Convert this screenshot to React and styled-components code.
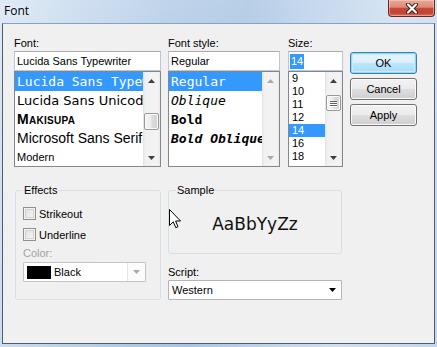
import React from 'react';
import styled, { createGlobalStyle, css } from 'styled-components';

const GlobalStyle = createGlobalStyle`
  html, body {
    margin: 0;
    padding: 0;
  }
  body {
    width: 437px;
    height: 347px;
    overflow: hidden;
    font-family: "Liberation Sans", Arial, sans-serif;
    font-size: 11px;
    color: #000;
  }
`;

const fontFaces = {
  mono: css`
    font-family: "DejaVu Sans Mono", monospace;
    font-size: 13px;
  `,
  unicode: css`
    font-family: "DejaVu Sans", sans-serif;
    font-size: 13px;
  `,
  block: css`
    font-family: "Liberation Sans", Arial, sans-serif;
    font-size: 14px;
    font-weight: 900;
    font-variant: small-caps;
    letter-spacing: 0.3px;
  `,
  sans: css`
    font-family: "Liberation Sans", Arial, sans-serif;
    font-size: 14px;
  `,
  modern: css`
    font-family: "Liberation Sans", Arial, sans-serif;
    font-size: 11px;
  `,
};

const fonts = [
  { name: 'Lucida Sans Typewriter', face: 'mono' },
  { name: 'Lucida Sans Unicode', face: 'unicode' },
  { name: 'Makisupa', face: 'block' },
  { name: 'Microsoft Sans Serif', face: 'sans' },
  { name: 'Modern', face: 'modern' },
];

const styles = [
  { name: 'Regular' },
  { name: 'Oblique', italic: true },
  { name: 'Bold', bold: true },
  { name: 'Bold Oblique', bold: true, italic: true },
];

const sizes = ['9', '10', '11', '12', '14', '16', '18'];

function App() {
  return (
    <>
      <GlobalStyle />
      <Window>
        <TitleBar>
          <Title>Font</Title>
          <CloseButton>
            <svg width="14" height="11" viewBox="0 0 14 11">
              <path d="M3 1.5 L11 9.5 M11 1.5 L3 9.5" stroke="#3d1b18" strokeWidth="4" strokeLinecap="round" />
              <path d="M3 1.5 L11 9.5 M11 1.5 L3 9.5" stroke="#ffffff" strokeWidth="2.2" strokeLinecap="round" />
            </svg>
          </CloseButton>
        </TitleBar>

        <Client>
          <TopRow>
            <Column $w={147} $gap={7}>
              <FieldLabel>Font:</FieldLabel>
              <TextBox>Lucida Sans Typewriter</TextBox>
              <ListBox>
                <Rows>
                  {fonts.map((f, i) => (
                    <FontRow key={f.name} $face={f.face} $selected={i === 0}>
                      {f.name}
                    </FontRow>
                  ))}
                </Rows>
                <ScrollBar offset={24} size={17} />
              </ListBox>
            </Column>

            <Column $w={112} $gap={8}>
              <FieldLabel>Font style:</FieldLabel>
              <TextBox>Regular</TextBox>
              <ListBox>
                <Rows>
                  {styles.map((s, i) => (
                    <StyleRow key={s.name} $bold={s.bold} $italic={s.italic} $selected={i === 0}>
                      {s.name}
                    </StyleRow>
                  ))}
                </Rows>
                <ScrollBar disabled />
              </ListBox>
            </Column>

            <Column $w={55} $gap={7}>
              <FieldLabel>Size:</FieldLabel>
              <TextBox>
                <Selection>14</Selection>
              </TextBox>
              <ListBox>
                <Rows>
                  {sizes.map((s) => (
                    <SizeRow key={s} $selected={s === '14'}>
                      {s}
                    </SizeRow>
                  ))}
                </Rows>
                <ScrollBar offset={6} size={16} grip />
              </ListBox>
            </Column>

            <Buttons>
              <Button $default>OK</Button>
              <Button>Cancel</Button>
              <Button>Apply</Button>
            </Buttons>
          </TopRow>

          <BottomRow>
            <Group $w={146} $h={116}>
              <Legend>Effects</Legend>
              <CheckRow>
                <CheckBox />
                Strikeout
              </CheckRow>
              <CheckRow>
                <CheckBox />
                Underline
              </CheckRow>
              <MutedLabel>Color:</MutedLabel>
              <Combo $w={123} $muted>
                <ComboField>
                  <Swatch />
                  Black
                </ComboField>
                <ComboArrow $muted>
                  <DownGlyph color="#a8a8a8" />
                </ComboArrow>
              </Combo>
            </Group>

            <SideColumn>
              <Group $w={174} $h={70}>
                <Legend>Sample</Legend>
                <SampleArea>AaBbYyZz</SampleArea>
              </Group>
              <ScriptLabel>Script:</ScriptLabel>
              <Combo $w={174}>
                <ComboField>Western</ComboField>
                <ComboArrow>
                  <DownGlyph color="#000" />
                </ComboArrow>
              </Combo>
            </SideColumn>
          </BottomRow>
        </Client>

        <Pointer width="13" height="21" viewBox="0 0 13 21">
          <path
            d="M0.5 0.5 L0.5 16.5 L4.3 12.8 L6.8 18.7 L9 17.7 L6.6 12 L11.5 12 Z"
            fill="#fff"
            stroke="#000"
            strokeWidth="1"
            strokeLinejoin="miter"
          />
        </Pointer>
      </Window>
    </>
  );
}

function UpGlyph({ color }) {
  return (
    <svg width="7" height="4" viewBox="0 0 7 4">
      <path d="M0 4 L3.5 0 L7 4 Z" fill={color} />
    </svg>
  );
}

function DownGlyph({ color }) {
  return (
    <svg width="7" height="4" viewBox="0 0 7 4">
      <path d="M0 0 L7 0 L3.5 4 Z" fill={color} />
    </svg>
  );
}

function ScrollBar({ offset = 0, size = 0, grip = false, disabled = false }) {
  const glyph = disabled ? '#a9a9a9' : '#3f3f3f';
  return (
    <Track>
      <ScrollArrow>
        <UpGlyph color={glyph} />
      </ScrollArrow>
      <Lane>
        {!disabled && (
          <Thumb $offset={offset} $size={size}>
            {grip && (
              <Grip>
                <span />
                <span />
                <span />
              </Grip>
            )}
          </Thumb>
        )}
      </Lane>
      <ScrollArrow>
        <DownGlyph color={glyph} />
      </ScrollArrow>
    </Track>
  );
}

export default App;

const Window = styled.div`
  position: relative;
  width: 437px;
  height: 347px;
  display: flex;
  flex-direction: column;
  box-sizing: border-box;
  background:
    linear-gradient(180deg, rgba(255, 255, 255, 0.18) 0%, rgba(255, 255, 255, 0) 40%),
    linear-gradient(100deg, #d8e6f4 0%, #c6d9ee 16%, #b2cbe6 34%, #a9c4e2 50%, #b9d0ea 62%, #cfdff1 80%, #c2d7ed 100%);
`;

const TitleBar = styled.div`
  height: 23px;
  display: flex;
  justify-content: space-between;
  align-items: flex-start;
  padding-left: 4px;
`;

const Title = styled.div`
  font-family: "Open Sans", "Liberation Sans", sans-serif;
  font-size: 12px;
  line-height: 16px;
  padding-top: 3px;
  color: #000;
  text-shadow: 0 0 6px rgba(255, 255, 255, 0.9);
`;

const CloseButton = styled.div`
  width: 47px;
  height: 17px;
  margin-right: 2px;
  box-sizing: border-box;
  border: 1px solid #6a2620;
  border-top: none;
  border-radius: 0 0 4px 4px;
  display: flex;
  align-items: center;
  justify-content: center;
  background: linear-gradient(180deg, #eaa999 0%, #dd8a77 45%, #c9483a 52%, #c2442f 80%, #d8705a 100%);
  box-shadow: inset 0 0 0 1px rgba(255, 220, 210, 0.45);
`;

const Client = styled.div`
  flex: 1;
  margin: 0 2px 3px 2px;
  border: 1px solid #4e5c6d;
  border-top-color: #8ba2bc;
  background: #f0f0f0;
  padding: 11px 0 0 11px;
  display: flex;
  flex-direction: column;
`;

const TopRow = styled.div`
  display: flex;
  align-items: flex-start;
`;

const Column = styled.div`
  width: ${(p) => p.$w}px;
  margin-right: ${(p) => p.$gap}px;
  display: flex;
  flex-direction: column;
`;

const FieldLabel = styled.div`
  height: 16px;
  line-height: 16px;
  white-space: nowrap;
`;

const TextBox = styled.div`
  height: 20px;
  box-sizing: border-box;
  border: 1px solid #b9c7d6;
  border-top-color: #abadb3;
  background: #fff;
  padding-left: 2px;
  line-height: 18px;
  white-space: nowrap;
  overflow: hidden;
`;

const Selection = styled.span`
  background: #3399ff;
  color: #fff;
  display: inline-block;
  line-height: 15px;
  padding: 0 1px;
  margin-left: -1px;
`;

const ListBox = styled.div`
  height: 96px;
  box-sizing: border-box;
  border: 1px solid #828790;
  background: #fff;
  display: flex;
`;

const Rows = styled.div`
  flex: 1;
  min-width: 0;
  overflow: hidden;
`;

const selectedRow = css`
  background: #3399ff;
  color: #fff;
`;

const FontRow = styled.div`
  height: 19px;
  line-height: 19px;
  padding-left: 2px;
  white-space: nowrap;
  overflow: hidden;
  ${(p) => fontFaces[p.$face]}
  ${(p) => p.$selected && selectedRow}
`;

const StyleRow = styled.div`
  height: 19px;
  line-height: 19px;
  padding-left: 2px;
  white-space: nowrap;
  overflow: hidden;
  font-family: "DejaVu Sans Mono", monospace;
  font-size: 13px;
  font-weight: ${(p) => (p.$bold ? 700 : 400)};
  font-style: ${(p) => (p.$italic ? 'italic' : 'normal')};
  ${(p) => p.$selected && selectedRow}
`;

const SizeRow = styled.div`
  height: 13px;
  line-height: 13px;
  padding-left: 3px;
  font-size: 11px;
  ${(p) => p.$selected && selectedRow}
`;

const Track = styled.div`
  width: 17px;
  display: flex;
  flex-direction: column;
  background: linear-gradient(90deg, #e3e3e3 0%, #f1f1f1 15%, #f4f4f4 85%, #e9e9e9 100%);
`;

const ScrollArrow = styled.div`
  height: 17px;
  display: flex;
  align-items: center;
  justify-content: center;
`;

const Lane = styled.div`
  flex: 1;
  display: flex;
  flex-direction: column;
  align-items: center;
`;

const Thumb = styled.div`
  margin-top: ${(p) => p.$offset}px;
  height: ${(p) => p.$size}px;
  width: 15px;
  box-sizing: border-box;
  border: 1px solid #9a9a9a;
  border-radius: 2px;
  background: linear-gradient(90deg, #f6f6f6 0%, #ececec 45%, #dcdcdc 55%, #d2d2d2 100%);
  box-shadow: inset 0 0 0 1px #fafafa;
  display: flex;
  align-items: center;
  justify-content: center;
`;

const Grip = styled.div`
  display: flex;
  flex-direction: column;
  gap: 1px;

  span {
    display: block;
    width: 7px;
    height: 1px;
    background: #5f5f5f;
    box-shadow: 0 1px 0 #fff;
  }
`;

const Buttons = styled.div`
  width: 67px;
  padding-top: 17px;
  display: flex;
  flex-direction: column;
  gap: 4px;
`;

const Button = styled.div`
  height: 22px;
  box-sizing: border-box;
  border: 1px solid #707070;
  border-radius: 3px;
  display: flex;
  align-items: center;
  justify-content: center;
  background: linear-gradient(180deg, #f2f2f2 0%, #ebebeb 48%, #dddddd 52%, #cfcfcf 100%);
  box-shadow: inset 0 0 0 1px #fbfbfb;

  ${(p) =>
    p.$default &&
    css`
      border-color: #3c7fb1;
      background: linear-gradient(180deg, #eaf6fd 0%, #d9f0fc 48%, #bee6fd 52%, #a7d9f5 100%);
      box-shadow: inset 0 0 0 1px #8fd7f7, inset 0 0 0 2px #c9ecfb;
    `}
`;

const BottomRow = styled.div`
  display: flex;
  align-items: flex-start;
  gap: 7px;
  margin-top: 17px;
  padding-left: 1px;
`;

const SideColumn = styled.div`
  display: flex;
  flex-direction: column;
`;

const Group = styled.fieldset`
  margin: 0;
  min-width: 0;
  width: ${(p) => p.$w}px;
  height: ${(p) => p.$h}px;
  box-sizing: border-box;
  padding: 7px 7px 0 7px;
  border: 1px solid #d5dfe5;
  border-radius: 3px;
  display: flex;
  flex-direction: column;
`;

const Legend = styled.legend`
  padding: 0 1px;
  line-height: 13px;
  font-size: 11px;
`;

const CheckRow = styled.div`
  height: 19px;
  display: flex;
  align-items: center;
  gap: 3px;
  margin-bottom: 2px;
`;

const CheckBox = styled.div`
  width: 13px;
  height: 13px;
  box-sizing: border-box;
  border: 1px solid #8e8f8f;
  background: linear-gradient(135deg, #dcdcdc 0%, #eeeeee 60%, #fbfbfb 100%);
  box-shadow: inset 0 0 0 1px #f4f4f4, inset 0 0 0 2px #d2d2d2;
`;

const MutedLabel = styled.div`
  height: 15px;
  line-height: 15px;
  color: #a3a3a3;
`;

const Combo = styled.div`
  width: ${(p) => p.$w}px;
  height: 20px;
  flex-shrink: 0;
  box-sizing: border-box;
  margin-top: ${(p) => (p.$muted ? 1 : 0)}px;
  border: 1px solid ${(p) => (p.$muted ? '#c4c4c4' : '#b5b5b5')};
  border-radius: 1px;
  background: #fff;
  display: flex;
`;

const ComboField = styled.div`
  flex: 1;
  display: flex;
  align-items: center;
  gap: 3px;
  padding-left: 3px;
  white-space: nowrap;
`;

const Swatch = styled.div`
  width: 24px;
  height: 13px;
  background: #000;
`;

const ComboArrow = styled.div`
  width: 17px;
  display: flex;
  align-items: center;
  justify-content: center;
  border-left: 1px solid ${(p) => (p.$muted ? '#e6e6e6' : 'transparent')};
  background: ${(p) => (p.$muted ? '#fbfbfb' : '#fff')};
`;

const SampleArea = styled.div`
  height: 40px;
  flex-shrink: 0;
  display: flex;
  align-items: center;
  justify-content: center;
  font-family: "DejaVu Sans", sans-serif;
  font-size: 17px;
  color: #111;
`;

const ScriptLabel = styled.div`
  height: 15px;
  line-height: 15px;
  margin-top: 11px;
`;

const Pointer = styled.svg`
  position: absolute;
  left: 169px;
  top: 209px;
`;
